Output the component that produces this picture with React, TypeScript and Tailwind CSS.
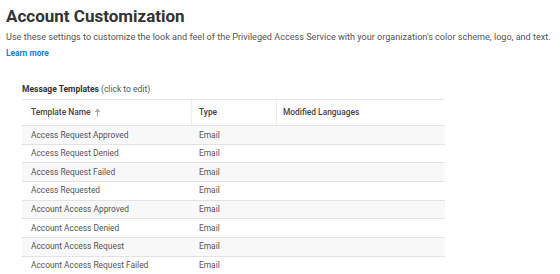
import React from "react";

const rows = [
  "Access Request Approved",
  "Access Request Denied",
  "Access Request Failed",
  "Access Requested",
  "Account Access Approved",
  "Account Access Denied",
  "Account Access Request",
  "Account Access Request Failed",
];

export default function App() {
  return (
    <div
      className="w-[560px] h-[274px] overflow-hidden bg-white"
      style={{ fontFamily: "Roboto, 'Liberation Sans', sans-serif" }}
    >
      <div className="pl-[6px] pt-[5px]">
        <h1 className="text-[17px] leading-[22px] font-bold text-[#333333]">Account Customization</h1>
        <p className="mt-[4px] text-[9.1px] leading-[12px] text-[#555555] whitespace-nowrap">
          Use these settings to customize the look and feel of the Privileged Access Service with your organization's color scheme, logo, and text.
        </p>
        <a className="block mt-[4px] text-[8.4px] leading-[12px] font-bold text-[#1a7fd6]">Learn more</a>
      </div>
      <div className="ml-[22px] w-[423px] mt-[24px]">
        <div className="text-[8.5px] leading-[12px] text-[#333333] pb-[4px]">
          <span className="font-bold">Message Templates</span>{" "}
          <span className="text-[#555555]">(click to edit)</span>
        </div>
        <div className="border-t border-[#e6e6e6]">
          <div className="flex h-[26px] items-center border-b border-[#e3e3e3] text-[8.4px] font-medium text-[#444444]">
            <div className="w-[170px] pl-[9px] h-full flex items-center border-r border-[#eeeeee]">
              Template Name
              <svg className="ml-[4px]" width="7" height="9" viewBox="0 0 7 9">
                <path d="M3.5 0.5 L6.5 4 H4.1 V8.5 H2.9 V4 H0.5 Z" fill="#aaaaaa" />
              </svg>
            </div>
            <div className="w-[85px] pl-[7px] h-full flex items-center border-r border-[#eeeeee]">Type</div>
            <div className="flex-1 pl-[6px] h-full flex items-center">Modified Languages</div>
          </div>
          {rows.map((r, i) => (
            <div
              key={r}
              className={
                "flex h-[18.67px] items-center border-b border-[#e3e3e3] text-[8.4px] text-[#555555] " +
                (i % 2 === 0 ? "bg-[#f8f8f8]" : "bg-white")
              }
            >
              <div className="w-[170px] pl-[9px]">{r}</div>
              <div className="w-[85px] pl-[7px]">Email</div>
              <div className="flex-1"></div>
            </div>
          ))}
        </div>
      </div>
    </div>
  );
}
